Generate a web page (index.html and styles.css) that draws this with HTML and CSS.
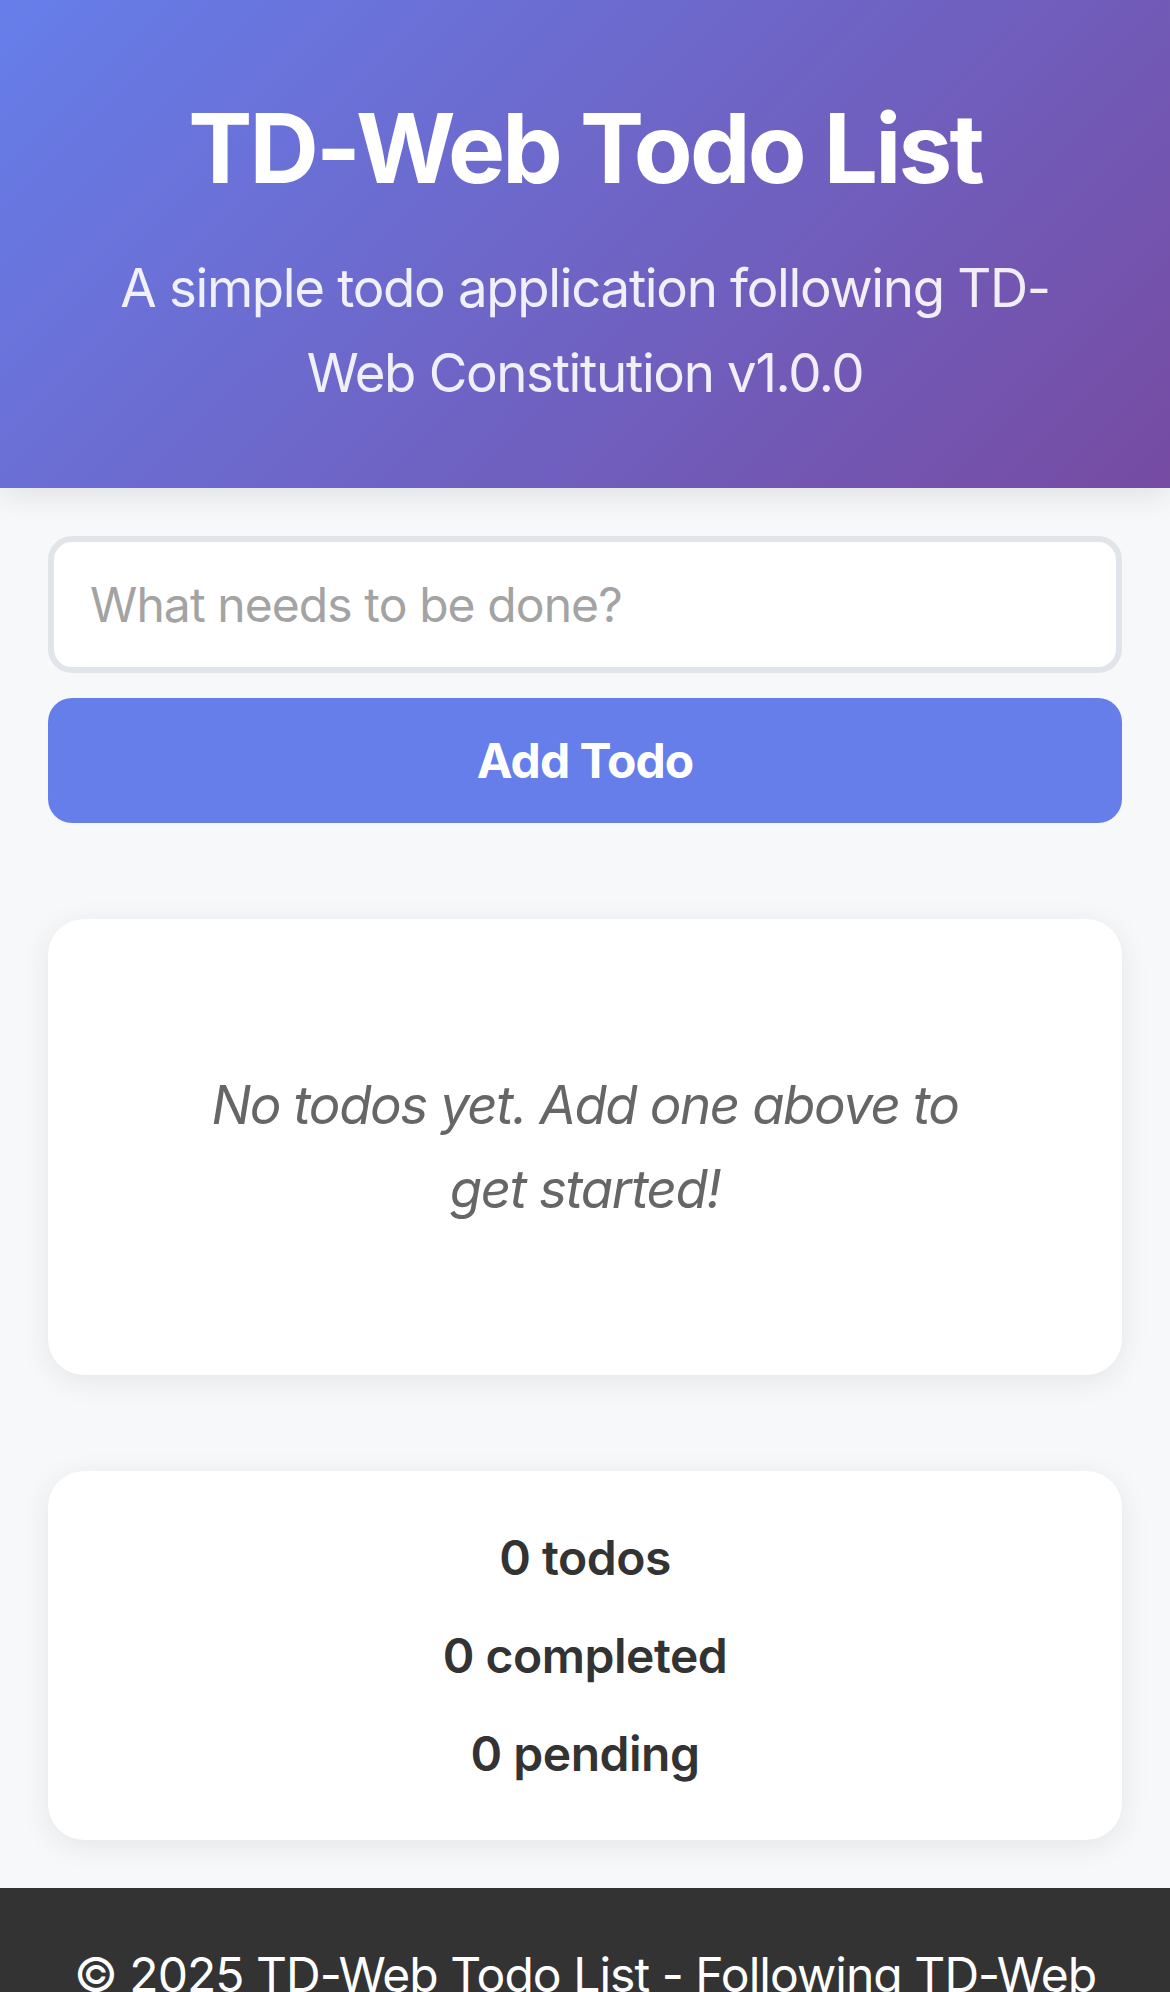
FILE: index.html
```html
<!DOCTYPE html>
<html lang="en">
<head>
<meta charset="utf-8">
<title>TD-Web Todo List</title>
<link rel="stylesheet" href="styles.css">
</head>
<body>
<header class="app-header">
  <h1 class="app-title">TD-Web Todo List</h1>
  <p class="app-subtitle">A simple todo application following TD-Web Constitution v1.0.0</p>
</header>
<main class="app-main">
  <form class="todo-form">
    <input class="todo-input" type="text" placeholder="What needs to be done?">
    <button class="todo-add" type="button">Add Todo</button>
  </form>
  <section class="card todo-list">
    <p class="empty-state">No todos yet. Add one above to get started!</p>
  </section>
  <section class="card stats">
    <span class="stat">0 todos</span>
    <span class="stat">0 completed</span>
    <span class="stat">0 pending</span>
  </section>
</main>
<footer class="app-footer">
  <p class="footer-text">© 2025 TD-Web Todo List - Following TD-Web Constitution v1.0.0</p>
</footer>
</body>
</html>
```
FILE: styles.css
```css
* { box-sizing: border-box; }
html, body { margin: 0; padding: 0; }
body {
  font-family: Inter, "Noto Sans", "Liberation Sans", sans-serif;
  background: #f7f8fa;
  color: #333;
}
.app-header {
  background: linear-gradient(135deg, #667eea 0%, #764ba2 100%);
  color: #fff;
  text-align: center;
  padding: 91px 96px 73px;
  box-shadow: 0 6px 30px rgba(0,0,0,0.1);
  position: relative;
  z-index: 1;
}
.app-title {
  margin: 0;
  font-size: 96px;
  line-height: 115px;
  font-weight: 700;
  letter-spacing: -0.029em;
}
.app-subtitle {
  margin: 40px 0 0;
  font-size: 52.8px;
  line-height: 84.5px;
  font-weight: 400;
  letter-spacing: -0.025em;
  opacity: 0.9;
}
.app-main {
  padding: 48px 48px 48px;
  display: flex;
  flex-direction: column;
}
.todo-form {
  display: flex;
  flex-direction: column;
  gap: 25px;
}
.todo-input {
  height: 137px;
  border: 6px solid #e1e4e8;
  border-radius: 24px;
  background: #fff;
  padding: 0 36px;
  font-family: inherit;
  font-size: 48px;
  letter-spacing: -0.019em;
  color: #333;
  outline: none;
}
.todo-input::placeholder { color: #a3a3a3; }
.todo-add {
  height: 125px;
  border: none;
  border-radius: 24px;
  background: #667eea;
  color: #fff;
  font-family: inherit;
  font-size: 48px;
  font-weight: 700;
  letter-spacing: -0.02em;
}
.card {
  background: #fff;
  border-radius: 36px;
  box-shadow: 0 6px 30px rgba(0,0,0,0.08);
}
.todo-list {
  margin-top: 96px;
  padding: 144px;
}
.empty-state {
  margin: 0;
  text-align: center;
  font-style: italic;
  color: #666;
  font-size: 52.8px;
  line-height: 84px;
  letter-spacing: -0.027em;
}
.stats {
  margin-top: 96px;
  padding: 48px;
  display: flex;
  flex-direction: column;
  align-items: center;
  gap: 21px;
}
.stat {
  font-size: 48px;
  line-height: 77px;
  font-weight: 600;
  letter-spacing: -0.01em;
  color: #333;
}
.app-footer {
  background: #333;
  color: #fff;
  text-align: center;
  padding: 48px;
}
.footer-text {
  margin: 0;
  font-size: 48px;
  line-height: 77px;
  letter-spacing: -0.02em;
}
```
